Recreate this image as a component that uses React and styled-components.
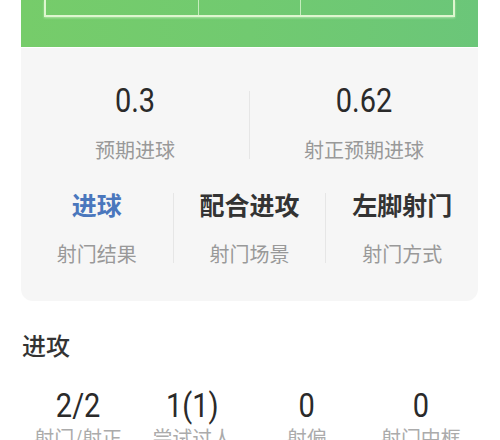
import React from "react";
import styled, { createGlobalStyle } from "styled-components";

const GlobalStyle = createGlobalStyle`
  html, body {
    margin: 0;
    padding: 0;
    background: #ffffff;
  }
  body {
    font-family: Roboto, "Noto Sans CJK SC", sans-serif;
    color: #333333;
  }
`;

const summary = [
  { value: "0.3", label: "预期进球" },
  { value: "0.62", label: "射正预期进球" },
];

const details = [
  { title: "进球", label: "射门结果", highlight: true },
  { title: "配合进攻", label: "射门场景" },
  { title: "左脚射门", label: "射门方式" },
];

const attack = [
  { value: "2/2", label: "射门/射正" },
  { value: "1(1)", label: "尝试过人" },
  { value: "0", label: "射偏" },
  { value: "0", label: "射门中框" },
];

const App = () => {
  return (
    <Page>
      <GlobalStyle />
      <Pitch>
        <Field>
          <GoalArea />
        </Field>
      </Pitch>
      <Card>
        <SummaryRow>
          {summary.map((item, i) => (
            <React.Fragment key={item.label}>
              {i > 0 && <Divider $height={68} />}
              <Cell>
                <Value>{item.value}</Value>
                <Label>{item.label}</Label>
              </Cell>
            </React.Fragment>
          ))}
        </SummaryRow>
        <DetailRow>
          {details.map((item, i) => (
            <React.Fragment key={item.label}>
              {i > 0 && <Divider $height={70} />}
              <Cell>
                <Title $highlight={item.highlight}>{item.title}</Title>
                <DetailLabel>{item.label}</DetailLabel>
              </Cell>
            </React.Fragment>
          ))}
        </DetailRow>
      </Card>
      <SectionTitle>进攻</SectionTitle>
      <StatsRow>
        {attack.map((item) => (
          <Cell key={item.label}>
            <Value>{item.value}</Value>
            <StatLabel>{item.label}</StatLabel>
          </Cell>
        ))}
      </StatsRow>
    </Page>
  );
};

export default App;

const Page = styled.div`
  width: 500px;
  height: 440px;
  overflow: hidden;
  padding: 0 22px 0 21px;
  box-sizing: border-box;
`;

const Pitch = styled.div`
  height: 47px;
  background: linear-gradient(90deg, #76cc6a 0%, #71ca70 50%, #6bc679 100%);
  padding: 0 23px;
  box-sizing: border-box;
`;

const Field = styled.div`
  height: 15px;
  border: 2px solid #def6cf;
  border-top: none;
  box-shadow: 0 1px 2px rgba(230, 255, 220, 0.5);
  display: flex;
  justify-content: center;
`;

const GoalArea = styled.div`
  width: 101px;
  height: 100%;
  border-left: 1px solid rgba(225, 248, 215, 0.75);
  border-right: 1px solid rgba(225, 248, 215, 0.75);
`;

const Card = styled.div`
  background: #f6f6f6;
  border-radius: 0 0 12px 12px;
  padding: 37px 0 33px;
  margin-top: 1px;
`;

const SummaryRow = styled.div`
  display: flex;
  align-items: center;
`;

const DetailRow = styled.div`
  display: flex;
  align-items: center;
  margin-top: 24px;
`;

const Divider = styled.div`
  width: 1px;
  height: ${(p) => p.$height}px;
  background: #e6e6e6;
  flex-shrink: 0;
`;

const Cell = styled.div`
  flex: 1;
  display: flex;
  flex-direction: column;
  align-items: center;
  min-width: 0;
`;

const Value = styled.div`
  font-family: Roboto, "Noto Sans CJK SC", sans-serif;
  font-size: 29px;
  line-height: 32px;
  font-weight: 400;
  color: #2a2a2a;
  transform: scaleY(1.12);
`;

const Label = styled.div`
  font-family: "Noto Sans CJK SC", sans-serif;
  font-size: 20px;
  line-height: 28px;
  margin-top: 19px;
  color: #999999;
  white-space: nowrap;
`;

const Title = styled.div`
  font-family: "Noto Sans CJK SC", sans-serif;
  font-size: 25px;
  line-height: 32px;
  font-weight: 700;
  color: ${(p) => (p.$highlight ? "#4a77bd" : "#333333")};
  white-space: nowrap;
`;

const DetailLabel = styled(Label)`
  margin-top: 20px;
`;

const SectionTitle = styled.div`
  font-family: "Noto Sans CJK SC", sans-serif;
  font-size: 24px;
  line-height: 32px;
  font-weight: 500;
  color: #333333;
  margin-top: 28px;
  padding-left: 1px;
`;

const StatsRow = styled.div`
  display: flex;
  margin-top: 29px;
`;

const StatLabel = styled(Label)`
  margin-top: 2px;
  color: #ababab;
`;
